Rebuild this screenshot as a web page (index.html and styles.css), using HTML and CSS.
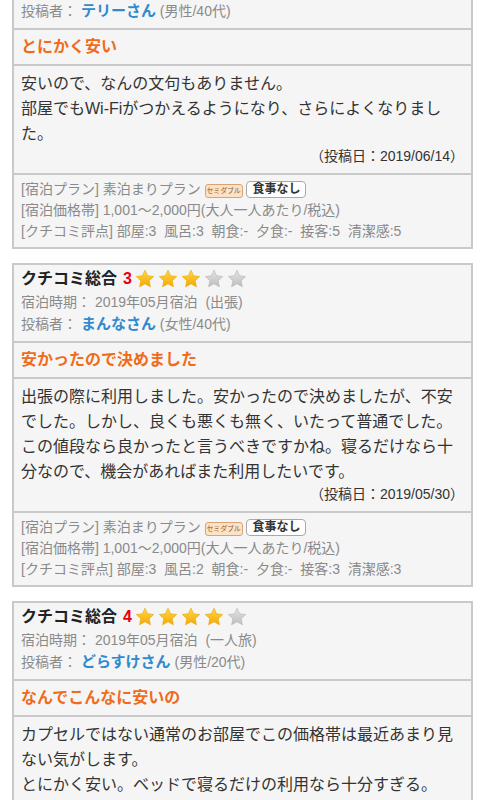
FILE: index.html
```html
<!DOCTYPE html>
<html lang="ja">
<head>
    <meta charset="UTF-8">
    <meta name="viewport" content="width=device-width, initial-scale=1.0">
    <title>クチコミ</title>
    <link rel="stylesheet" href="styles.css">
</head>
<body>
    <svg width="0" height="0" class="defs">
        <defs>
            <linearGradient id="gold" x1="0" y1="0" x2="0" y2="1">
                <stop offset="0" stop-color="#ffd84a"/>
                <stop offset="1" stop-color="#f5a800"/>
            </linearGradient>
            <linearGradient id="grey" x1="0" y1="0" x2="0" y2="1">
                <stop offset="0" stop-color="#e4e4e4"/>
                <stop offset="1" stop-color="#bdbdbd"/>
            </linearGradient>
            <symbol id="star" viewBox="0 0 20 20">
                <path d="M10 1.2l2.6 5.6 6.1.7-4.5 4.2 1.2 6.1L10 14.8l-5.4 3 1.2-6.1-4.5-4.2 6.1-.7z"/>
            </symbol>
        </defs>
    </svg>

    <div class="list">
        <!-- 1件目 (上はスクロールで隠れている) -->
        <div class="review first">
            <div class="head">
                <p class="info">投稿者： <span class="name">テリーさん</span> (男性/40代)</p>
            </div>
            <div class="title">とにかく安い</div>
            <div class="body">
                <p class="text">安いので、なんの文句もありません。<br>部屋でもWi-Fiがつかえるようになり、さらによくなりました。</p>
                <p class="date">（投稿日：2019/06/14）</p>
            </div>
            <div class="meta">
                <p>[宿泊プラン] 素泊まりプラン <span class="room">セミダブル</span> <span class="meal">食事なし</span></p>
                <p>[宿泊価格帯] 1,001〜2,000円(大人一人あたり/税込)</p>
                <p>[クチコミ評点] 部屋:3&nbsp; 風呂:3&nbsp; 朝食:-&nbsp; 夕食:-&nbsp; 接客:5&nbsp; 清潔感:5</p>
            </div>
        </div>

        <div class="review">
            <div class="head">
                <div class="total">クチコミ総合 <span class="score">3</span>
                    <span class="stars">
                        <svg class="on"><use href="#star"/></svg><svg class="on"><use href="#star"/></svg><svg class="on"><use href="#star"/></svg><svg class="off"><use href="#star"/></svg><svg class="off"><use href="#star"/></svg>
                    </span>
                </div>
                <p class="info">宿泊時期： 2019年05月宿泊&nbsp; (出張)</p>
                <p class="info">投稿者： <span class="name">まんなさん</span> (女性/40代)</p>
            </div>
            <div class="title">安かったので決めました</div>
            <div class="body">
                <p class="text">出張の際に利用しました。安かったので決めましたが、不安でした。しかし、良くも悪くも無く、いたって普通でした。この値段なら良かったと言うべきですかね。寝るだけなら十分なので、機会があればまた利用したいです。</p>
                <p class="date">（投稿日：2019/05/30）</p>
            </div>
            <div class="meta">
                <p>[宿泊プラン] 素泊まりプラン <span class="room">セミダブル</span> <span class="meal">食事なし</span></p>
                <p>[宿泊価格帯] 1,001〜2,000円(大人一人あたり/税込)</p>
                <p>[クチコミ評点] 部屋:3&nbsp; 風呂:2&nbsp; 朝食:-&nbsp; 夕食:-&nbsp; 接客:3&nbsp; 清潔感:3</p>
            </div>
        </div>

        <div class="review">
            <div class="head">
                <div class="total">クチコミ総合 <span class="score">4</span>
                    <span class="stars">
                        <svg class="on"><use href="#star"/></svg><svg class="on"><use href="#star"/></svg><svg class="on"><use href="#star"/></svg><svg class="on"><use href="#star"/></svg><svg class="off"><use href="#star"/></svg>
                    </span>
                </div>
                <p class="info">宿泊時期： 2019年05月宿泊&nbsp; (一人旅)</p>
                <p class="info">投稿者： <span class="name">どらすけさん</span> (男性/20代)</p>
            </div>
            <div class="title">なんでこんなに安いの</div>
            <div class="body">
                <p class="text">カプセルではない通常のお部屋でこの価格帯は最近あまり見ない気がします。<br>とにかく安い。ベッドで寝るだけの利用なら十分すぎる。</p>
            </div>
        </div>
    </div>
</body>
</html>
```

FILE: styles.css
```css
body{
 margin: 0;
 background-color: #fff;
 font-family: "Liberation Sans", "Noto Sans CJK JP", sans-serif;
 color: #333;
 overflow: hidden;
}
p{
 margin: 0;
}
.defs{
 position: absolute;
}
.list{
 display: flex;
 flex-direction: column;
 gap: 14px;
 padding: 0 12px;
}
.review{
 background-color: #f5f5f5;
 border: 2px solid #c9c9c9;
}
.first{
 margin-top: -2px;
}
.first .head{
 padding-top: 0;
}
.head{
 padding: 2px 7px 6px;
 font-size: 14px;
 line-height: 22px;
 color: #8a8a8a;
}
.total{
 display: flex;
 align-items: center;
 height: 24px;
 font-size: 16px;
 font-weight: bold;
 color: #222;
}
.score{
 color: #e60012;
 font-size: 16px;
 margin-left: 6px;
 margin-right: 3px;
}
.stars{
 display: flex;
 gap: 3px;
}
.stars svg{
 width: 20px;
 height: 20px;
}
.stars .on{
 fill: url(#gold);
 stroke: #e8a400;
 stroke-width: 0.6;
}
.stars .off{
 fill: url(#grey);
 stroke: #b5b5b5;
 stroke-width: 0.6;
}
.name{
 color: #2f8ad0;
 font-weight: bold;
 font-size: 15px;
}
.title{
 border-top: 2px solid #c9c9c9;
 padding: 7px 7px;
 font-size: 16px;
 line-height: 20px;
 font-weight: bold;
 color: #ef6c1a;
}
.body{
 border-top: 2px solid #c9c9c9;
 padding: 5px 7px 6px;
}
.text{
 font-size: 16px;
 line-height: 25px;
 color: #333;
}
.date{
 text-align: right;
 font-size: 14px;
 line-height: 21px;
 color: #333;
}
.meta{
 border-top: 2px solid #c9c9c9;
 padding: 4px 7px 5px;
 font-size: 14px;
 line-height: 21px;
 color: #8a8a8a;
}
.room{
 display: inline-block;
 font-size: 7px;
 line-height: 12px;
 padding: 0 1px;
 letter-spacing: -0.2px;
 color: #8a5a2a;
 background-color: #fde2c8;
 border: 1px solid #d8a474;
 border-radius: 3px;
 vertical-align: 1px;
}
.meal{
 display: inline-block;
 font-size: 12px;
 line-height: 15px;
 padding: 0 5px;
 font-weight: bold;
 color: #333;
 background-color: #fff;
 border: 1px solid #a8a8a8;
 border-radius: 4px;
 vertical-align: 1px;
}
```
